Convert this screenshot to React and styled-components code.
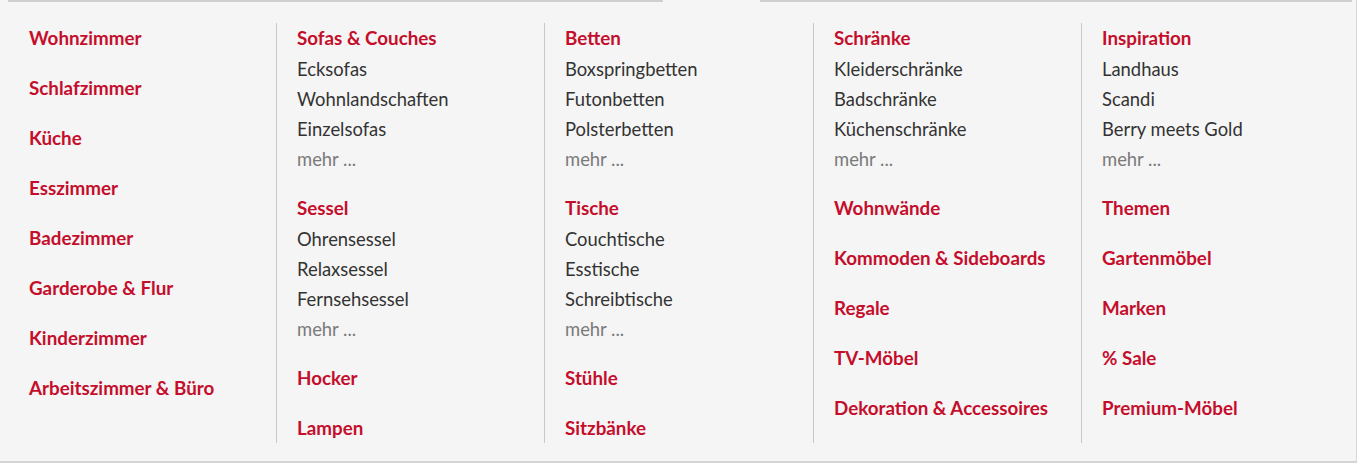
import React from 'react';
import styled, { createGlobalStyle } from 'styled-components';

const GlobalStyle = createGlobalStyle`
  body {
    margin: 0;
    background: #ffffff;
    font-family: Lato, "Open Sans", sans-serif;
  }
`;

// Панель меню
const Panel = styled.nav`
  position: relative;
  box-sizing: border-box;
  width: 1357px;
  height: 463px;
  background: #f5f5f5;
  border-right: 1px solid #d8d8d8;
  border-bottom: 2px solid #d4d4d4;
  padding: 23px 0 0 8px;
  display: grid;
  grid-template-columns: 268px 268px 269px 268px 1fr;

  &::before {
    content: '';
    position: absolute;
    top: 0;
    left: 8px;
    right: 4px;
    height: 2px;
    background: #cfcfcf;
  }

  &::after {
    content: '';
    position: absolute;
    top: 0;
    left: 663px;
    width: 97px;
    height: 2px;
    background: #f5f5f5;
  }
`;

const Column = styled.div`
  box-sizing: border-box;
  padding-left: ${(p) => (p.$first ? '21px' : '20px')};
  border-left: ${(p) => (p.$first ? 'none' : '1px solid #c9c9c9')};
  align-self: start;
  height: 420px;
`;

const Group = styled.div`
  display: flex;
  flex-direction: column;
  margin-bottom: 20px;
`;

const Heading = styled.a`
  display: block;
  font-size: 18.8px;
  line-height: 30px;
  font-weight: 700;
  color: #c40e2c;
  text-decoration: none;
  white-space: nowrap;
`;

const Item = styled.a`
  display: block;
  font-size: 18.4px;
  line-height: 30px;
  color: ${(p) => (p.$more ? '#7a7a7a' : '#333333')};
  text-decoration: none;
  white-space: nowrap;
  transform: translateY(1px);
`;

const columns = [
  [
    { title: 'Wohnzimmer' },
    { title: 'Schlafzimmer' },
    { title: 'Küche' },
    { title: 'Esszimmer' },
    { title: 'Badezimmer' },
    { title: 'Garderobe & Flur' },
    { title: 'Kinderzimmer' },
    { title: 'Arbeitszimmer & Büro' },
  ],
  [
    { title: 'Sofas & Couches', items: ['Ecksofas', 'Wohnlandschaften', 'Einzelsofas'] },
    { title: 'Sessel', items: ['Ohrensessel', 'Relaxsessel', 'Fernsehsessel'] },
    { title: 'Hocker' },
    { title: 'Lampen' },
  ],
  [
    { title: 'Betten', items: ['Boxspringbetten', 'Futonbetten', 'Polsterbetten'] },
    { title: 'Tische', items: ['Couchtische', 'Esstische', 'Schreibtische'] },
    { title: 'Stühle' },
    { title: 'Sitzbänke' },
  ],
  [
    { title: 'Schränke', items: ['Kleiderschränke', 'Badschränke', 'Küchenschränke'] },
    { title: 'Wohnwände' },
    { title: 'Kommoden & Sideboards' },
    { title: 'Regale' },
    { title: 'TV-Möbel' },
    { title: 'Dekoration & Accessoires' },
  ],
  [
    { title: 'Inspiration', items: ['Landhaus', 'Scandi', 'Berry meets Gold'] },
    { title: 'Themen' },
    { title: 'Gartenmöbel' },
    { title: 'Marken' },
    { title: '% Sale' },
    { title: 'Premium-Möbel' },
  ],
];

const App = () => (
  <>
    <GlobalStyle />
    <Panel>
      {columns.map((groups, ci) => (
        <Column key={ci} $first={ci === 0}>
          {groups.map((g) => (
            <Group key={g.title}>
              <Heading href="#">{g.title}</Heading>
              {g.items && g.items.map((it) => <Item key={it} href="#">{it}</Item>)}
              {g.items && <Item href="#" $more>mehr ...</Item>}
            </Group>
          ))}
        </Column>
      ))}
    </Panel>
  </>
);

export default App;
